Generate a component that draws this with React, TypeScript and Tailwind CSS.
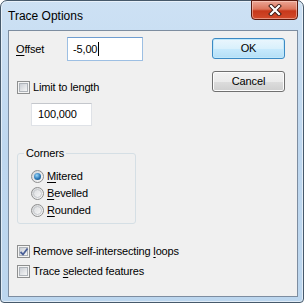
function CheckBox({ checked = false }: { checked?: boolean }) {
  return (
    <span className="relative flex h-[13px] w-[13px] shrink-0 items-center justify-center border border-[#8e8f8f] bg-[#f4f4f4]">
      <span className="h-[9px] w-[9px] border border-[#aeb3b9] bg-gradient-to-br from-[#cbcfd5] to-[#f6f6f6]" />
      {checked && (
        <svg className="absolute left-[1px] top-[1px]" width="10" height="10" viewBox="0 0 10 10">
          <path d="M1.5 5 L4 7.5 L8.5 1.5" fill="none" stroke="#4a5f97" strokeWidth="1.8" />
        </svg>
      )}
    </span>
  )
}

function Radio({ checked = false }: { checked?: boolean }) {
  return (
    <span className="flex h-[13px] w-[13px] shrink-0 items-center justify-center rounded-full border border-[#8e8f8f] bg-gradient-to-br from-[#d2d4d7] to-[#fbfbfb]">
      {checked ? (
        <span className="h-[7px] w-[7px] rounded-full bg-[radial-gradient(circle_at_40%_35%,#9ad8fb,#2b77b5_55%,#0f3f6c)]" />
      ) : (
        <span className="h-[9px] w-[9px] rounded-full border border-[#c5c8cc] bg-gradient-to-br from-[#dcdee1] to-[#f7f7f7]" />
      )}
    </span>
  )
}

function Btn({ label, primary = false }: { label: string; primary?: boolean }) {
  return (
    <div
      className={
        "flex h-[21px] w-[73px] items-center justify-center rounded-[3px] border " +
        (primary
          ? "border-[#3c8ac4] bg-[linear-gradient(#eaf6fd_0%,#d9f0fc_50%,#c8eafd_51%,#b5dff6_100%)] shadow-[inset_0_0_0_1px_#c0e8fb]"
          : "border-[#707070] bg-[linear-gradient(#f2f2f2_0%,#ebebeb_50%,#dddddd_51%,#cfcfcf_100%)] shadow-[inset_0_0_0_1px_#fcfcfc]")
      }
    >
      {label}
    </div>
  )
}

export default function App() {
  return (
    <div className="h-[305px] w-[306px] bg-white font-['Liberation_Sans',Arial,sans-serif] text-[11px] leading-none tracking-[-0.15px] text-black">
      <div className="flex h-[303px] w-[304px] flex-col rounded-t-[7px] rounded-b-[4px] border border-[#46596b] bg-gradient-to-b from-[#cde1f4] via-[#bed7ef] to-[#bcd6ee] shadow-[inset_0_0_0_1px_rgba(255,255,255,0.55)]">
        {/* title bar */}
        <div className="flex h-[29px] items-start">
          <span className="ml-[7px] mt-[9px] text-[12px] leading-none tracking-normal">Trace Options</span>
          <div className="-mt-px ml-auto mr-[5px] flex h-[20px] w-[47px] items-center justify-center rounded-b-[4px] border border-[#5a1a0f] bg-[linear-gradient(#eba595_0%,#dc755c_45%,#c7381b_55%,#d24a2b_100%)] shadow-[inset_0_0_0_1px_rgba(255,220,210,0.5)]">
            <svg width="16" height="12" viewBox="0 0 16 12">
              <path d="M4 2 L12 10 M12 2 L4 10" stroke="#3b1a14" strokeWidth="4" strokeLinecap="square" />
              <path d="M4 2 L12 10 M12 2 L4 10" stroke="#ffffff" strokeWidth="2.2" strokeLinecap="square" />
            </svg>
          </div>
        </div>

        {/* client area */}
        <div className="ml-[7px] flex h-[267px] w-[290px] border border-[#7d8da0] bg-[#f0f0f0]">
          <div className="flex flex-1 flex-col">
            <div className="mt-[6px] flex items-center">
              <span className="ml-[7px] w-[51px]">
                <span className="underline underline-offset-2">O</span>ffset
              </span>
              <div className="flex h-[24px] w-[76px] items-center border border-[#9dbfe3] border-t-[#6f9dd0] bg-white pl-[5px]">
                -5,00
                <span className="ml-px h-[14px] w-px bg-black" />
              </div>
            </div>

            <div className="ml-[8px] mt-[20px] flex h-[13px] items-center gap-[3px]">
              <CheckBox />
              <span>Limit to length</span>
            </div>

            <div className="ml-[22px] mt-[9px] flex h-[23px] w-[61px] items-center border border-[#dfe2e7] border-t-[#c4c7cc] bg-white pl-[6px]">
              100,000
            </div>

            <div className="relative ml-[8px] mt-[27px] h-[71px] w-[119px] rounded-[3px] border border-[#d5dfe5] pl-[13px] pt-[14px]">
              <span className="absolute -top-[6px] left-[6px] bg-[#f0f0f0] px-[2px]">Corners</span>
              <div className="flex h-[17px] items-center gap-[3px]">
                <Radio checked />
                <span>
                  <span className="underline underline-offset-2">M</span>itered
                </span>
              </div>
              <div className="flex h-[17px] items-center gap-[3px]">
                <Radio />
                <span>
                  <span className="underline underline-offset-2">B</span>evelled
                </span>
              </div>
              <div className="flex h-[17px] items-center gap-[3px]">
                <Radio />
                <span>
                  <span className="underline underline-offset-2">R</span>ounded
                </span>
              </div>
            </div>

            <div className="ml-[8px] mt-[17px] flex h-[20px] items-center gap-[3px]">
              <CheckBox checked />
              <span>
                Remove self-intersecting <span className="underline underline-offset-2">l</span>oops
              </span>
            </div>
            <div className="ml-[8px] flex h-[20px] items-center gap-[3px]">
              <CheckBox />
              <span>
                Trace <span className="underline underline-offset-2">s</span>elected features
              </span>
            </div>
          </div>

          <div className="mr-[12px] mt-[7px] flex flex-col gap-[12px]">
            <Btn label="OK" primary />
            <Btn label="Cancel" />
          </div>
        </div>
      </div>
    </div>
  )
}
